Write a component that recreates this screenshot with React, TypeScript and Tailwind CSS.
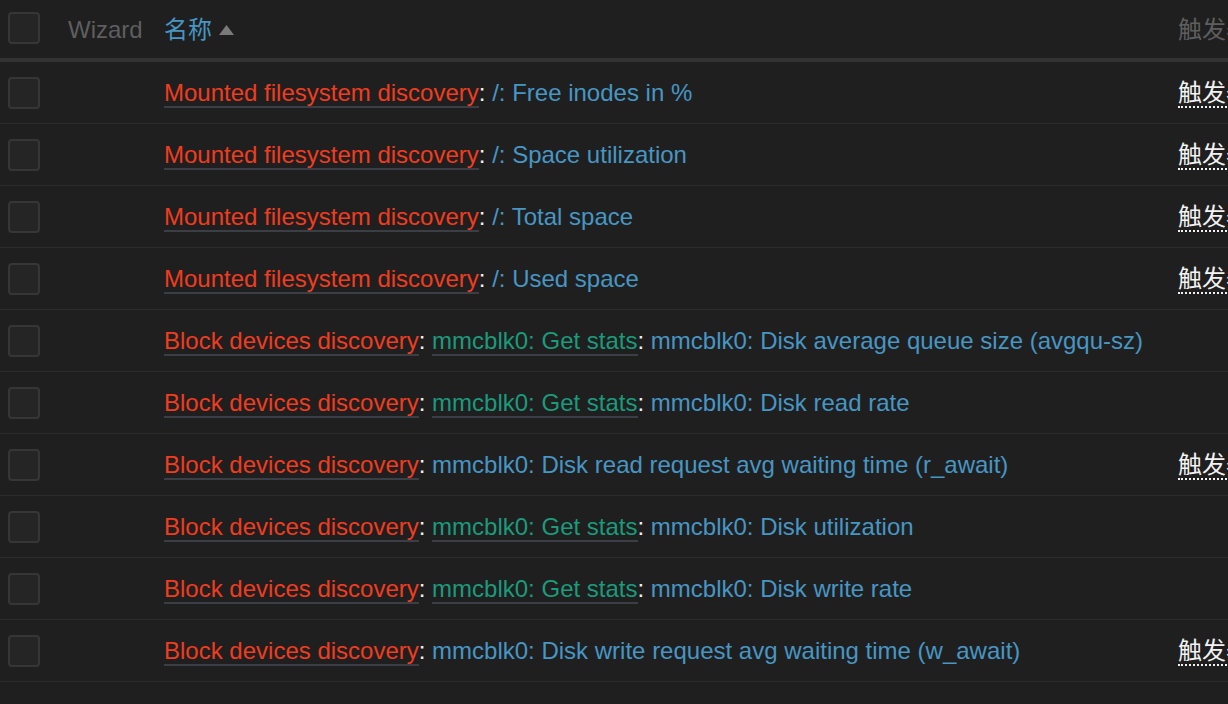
import React from "react";

type Row = {
  rule: string;
  parent?: string;
  item: string;
  trigger: boolean;
};

const rows: Row[] = [
  { rule: "Mounted filesystem discovery", item: "/: Free inodes in %", trigger: true },
  { rule: "Mounted filesystem discovery", item: "/: Space utilization", trigger: true },
  { rule: "Mounted filesystem discovery", item: "/: Total space", trigger: true },
  { rule: "Mounted filesystem discovery", item: "/: Used space", trigger: true },
  { rule: "Block devices discovery", parent: "mmcblk0: Get stats", item: "mmcblk0: Disk average queue size (avgqu-sz)", trigger: false },
  { rule: "Block devices discovery", parent: "mmcblk0: Get stats", item: "mmcblk0: Disk read rate", trigger: false },
  { rule: "Block devices discovery", item: "mmcblk0: Disk read request avg waiting time (r_await)", trigger: true },
  { rule: "Block devices discovery", parent: "mmcblk0: Get stats", item: "mmcblk0: Disk utilization", trigger: false },
  { rule: "Block devices discovery", parent: "mmcblk0: Get stats", item: "mmcblk0: Disk write rate", trigger: false },
  { rule: "Block devices discovery", item: "mmcblk0: Disk write request avg waiting time (w_await)", trigger: true },
];

const Checkbox = () => (
  <div className="w-8 h-8 rounded-[4px] border-2 border-[#363636] bg-[#252525]" />
);

export default function App() {
  return (
    <div
      className="w-[1228px] h-[704px] overflow-hidden bg-[#1f1f1f] text-[24px] text-[#f2f2f2]"
      style={{ fontFamily: '"Liberation Sans", Arial, "Noto Sans CJK SC", sans-serif' }}
    >
      {/* header */}
      <div className="flex items-center h-[62px] pb-[2px] border-b-4 border-[#333333] whitespace-nowrap">
        <div className="w-[60px] pl-2 shrink-0">
          <Checkbox />
        </div>
        <div className="w-[104px] pl-2 pt-[3px] shrink-0 text-[#5e5e5e]">Wizard</div>
        <div className="w-[1014px] pt-[3px] shrink-0 flex items-center text-[#4796c4]">
          名称
          <svg className="ml-[7px] mt-[1px]" width="15" height="10" viewBox="0 0 15 10">
            <polygon points="7.5,0 15,10 0,10" fill="#7a7a7a" />
          </svg>
        </div>
        <div className="shrink-0 pt-[3px] text-[#5e5e5e]">触发器</div>
      </div>
      {rows.map((r, i) => (
        <div key={i} className="flex items-center h-[62px] border-b border-[#2c2c2c] whitespace-nowrap">
          <div className="w-[60px] pl-2 shrink-0">
            <Checkbox />
          </div>
          <div className="w-[104px] shrink-0" />
          <div className="w-[1014px] shrink-0">
            <span className="text-[#f03c1f] border-b-2 border-[#3b3f45]">{r.rule}</span>
            <span>: </span>
            {r.parent && (
              <>
                <span className="text-[#1b9a7c] border-b-2 border-[#3b3f45]">{r.parent}</span>
                <span>: </span>
              </>
            )}
            <span className="text-[#4796c4]">{r.item}</span>
          </div>
          {r.trigger && (
            <div className="shrink-0">
              <span className="inline-block leading-[27px] border-b-2 border-dotted border-[#f2f2f2]">触发器</span>
            </div>
          )}
        </div>
      ))}
    </div>
  );
}
